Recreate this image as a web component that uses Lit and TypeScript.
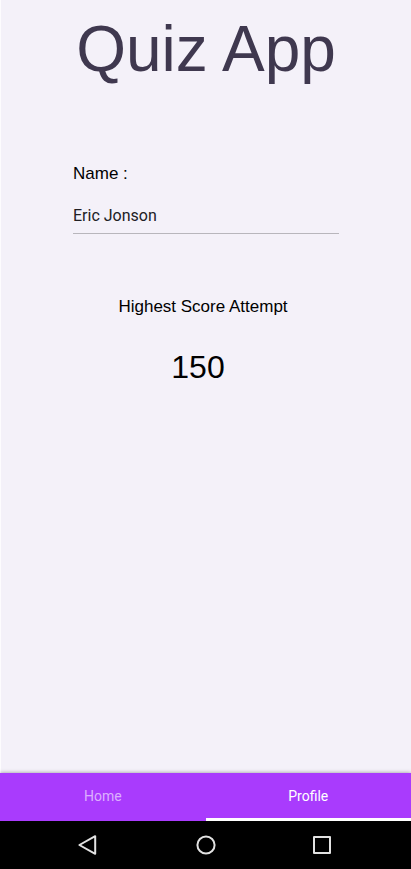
import { LitElement, html, css } from "lit";
import { customElement, state } from "lit/decorators.js";
import { classMap } from "lit/directives/class-map.js";

type Tab = "Home" | "Profile";

@customElement("app-root")
export class AppRoot extends LitElement {
  static styles = css`
    :host {
      display: flex;
      flex-direction: column;
      min-height: 100vh;
      background: #f4f1f9;
      font-family: "Liberation Sans", Arial, sans-serif;
      color: #000;
    }
    main {
      flex: 1;
      display: flex;
      flex-direction: column;
      border-left: 1px solid #fdfcfe;
    }
    h1 {
      margin: 0;
      padding-top: 13px;
      font-size: 64px;
      line-height: 72px;
      font-weight: 400;
      text-align: center;
      color: #3f384f;
    }
    .field {
      display: flex;
      flex-direction: column;
      gap: 16px;
      margin: 79px 72px 0;
    }
    label,
    h2 {
      margin: 0;
      font-size: 17px;
      line-height: 20px;
      font-weight: 400;
    }
    input {
      width: 100%;
      height: 34px;
      box-sizing: border-box;
      padding: 0 0 2px;
      border: 0;
      border-bottom: 1px solid #b8b6bc;
      border-radius: 0;
      outline: none;
      background: transparent;
      color: #212024;
      font-family: Roboto, sans-serif;
      font-size: 16px;
    }
    .score {
      display: flex;
      flex-direction: column;
      align-items: center;
      gap: 32px;
      padding: 63px 6px 0 0;
    }
    .value {
      margin: 0;
      padding-right: 10px;
      font-size: 32px;
      line-height: 36px;
    }
    .tabs {
      display: flex;
      height: 48px;
      background: #a93bfd;
      box-shadow: 0 0 4px rgba(0, 0, 0, 0.4);
    }
    .tab {
      flex: 1;
      padding: 1px 0 0;
      border: 0;
      border-bottom: 3px solid transparent;
      background: none;
      color: rgba(255, 255, 255, 0.6);
      font-family: Roboto, sans-serif;
      font-size: 14px;
    }
    .active {
      border-bottom-color: #fff;
      color: #fff;
    }
    .system {
      display: flex;
      justify-content: center;
      gap: 92px;
      height: 48px;
      background: #000;
      position: relative;
    }
    .key {
      display: flex;
      align-items: center;
      padding: 0;
      border: 0;
      background: none;
    }
    svg {
      display: block;
      width: 24px;
      height: 24px;
      fill: none;
      stroke: #e2e2e2;
      stroke-width: 2;
      stroke-linejoin: round;
    }
  `;

  @state() private tab: Tab = "Profile";

  private renderTab(name: Tab) {
    const selected = this.tab === name;
    return html`<button
      class=${classMap({ tab: true, active: selected })}
      role="tab"
      aria-selected=${selected ? "true" : "false"}
      @click=${() => (this.tab = name)}
    >${name}</button>`;
  }

  render() {
    return html`
      <main>
        <h1>Quiz App</h1>
        <div class="field">
          <label for="name">Name :</label>
          <input id="name" type="text" value="Eric Jonson" />
        </div>
        <section class="score">
          <h2>Highest Score Attempt</h2>
          <p class="value">150</p>
        </section>
      </main>
      <div class="tabs" role="tablist">
        ${this.renderTab("Home")}${this.renderTab("Profile")}
      </div>
      <nav class="system">
        <button class="key" aria-label="Back">
          <svg viewBox="0 0 24 24"><path d="M17.2 3.2 L17.2 20.8 L1.4 12 Z" /></svg>
        </button>
        <button class="key" aria-label="Home screen">
          <svg viewBox="0 0 24 24"><circle cx="12" cy="12" r="8.6" /></svg>
        </button>
        <button class="key" aria-label="Recent apps">
          <svg viewBox="0 0 24 24"><rect x="4" y="4" width="16" height="16" /></svg>
        </button>
      </nav>
    `;
  }
}
